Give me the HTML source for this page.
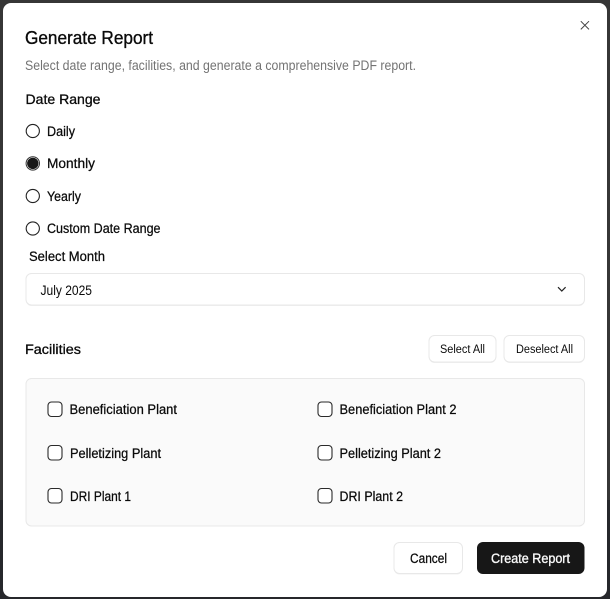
<!DOCTYPE html>
<html><head><meta charset="utf-8"><style>
html,body{margin:0;padding:0;width:610px;height:599px;overflow:hidden;background:#333}
svg{display:block}
text{font-family:"Liberation Sans",sans-serif;fill:#0a0a0a;stroke:#0a0a0a;stroke-width:.25px}
.n{stroke:none}
</style></head><body>
<svg width="610" height="599" viewBox="0 0 610 599" xmlns="http://www.w3.org/2000/svg">
<rect width="610" height="599" fill="#363636"/>
<rect x="0" y="500" width="610" height="99" fill="#26272b"/>
<rect x="3" y="3" width="604" height="594" rx="8" fill="#fff"/>
<path d="M580.8 21.2L589 29.4M589 21.2L580.8 29.4" stroke="#444" stroke-width="1" fill="none"/>
<text x="25" y="44" font-size="18.5" textLength="128" lengthAdjust="spacingAndGlyphs" style="stroke-width:.35px">Generate Report</text>
<text x="25" y="70" font-size="13.5" textLength="391" lengthAdjust="spacingAndGlyphs" class="n" style="fill:#737373">Select date range, facilities, and generate a comprehensive PDF report.</text>
<text x="25.5" y="104" font-size="14" textLength="75" lengthAdjust="spacingAndGlyphs" style="stroke-width:.3px">Date Range</text>
<circle cx="32.8" cy="131" r="6.6" fill="#fff" stroke="#222" stroke-width="1.1"/>
<text x="47" y="136" font-size="13.5" textLength="28" lengthAdjust="spacingAndGlyphs">Daily</text>
<circle cx="32.8" cy="163.4" r="6.7" fill="#fff" stroke="#333" stroke-width="1"/>
<circle cx="32.8" cy="163.4" r="5.7" fill="#171717"/>
<text x="47" y="168" font-size="13.5" textLength="48" lengthAdjust="spacingAndGlyphs">Monthly</text>
<circle cx="32.8" cy="196" r="6.6" fill="#fff" stroke="#222" stroke-width="1.1"/>
<text x="47" y="201" font-size="13.5" textLength="34" lengthAdjust="spacingAndGlyphs">Yearly</text>
<circle cx="32.8" cy="228.5" r="6.6" fill="#fff" stroke="#222" stroke-width="1.1"/>
<text x="47" y="233" font-size="13.5" textLength="113.5" lengthAdjust="spacingAndGlyphs">Custom Date Range</text>
<text x="29" y="261" font-size="13.5" textLength="76" lengthAdjust="spacingAndGlyphs">Select Month</text>
<rect x="26" y="274.5" width="558.5" height="31.5" rx="5.5" fill="#f0f0f0"/>
<rect x="26" y="273.5" width="558.5" height="31.5" rx="5.5" fill="#fff" stroke="#e8e8e8"/>
<text x="40.5" y="295" font-size="13.5" textLength="51.5" lengthAdjust="spacingAndGlyphs" class="n">July 2025</text>
<path d="M558 287.2L561.8 291L565.6 287.2" stroke="#222" stroke-width="1.2" fill="none"/>
<text x="25" y="354" font-size="13.5" textLength="56" lengthAdjust="spacingAndGlyphs" style="stroke-width:.3px">Facilities</text>
<rect x="429" y="336.5" width="67" height="26.5" rx="5.5" fill="#f0f0f0"/>
<rect x="429" y="335.5" width="67" height="26.5" rx="5.5" fill="#fff" stroke="#e8e8e8"/>
<text x="440" y="353" font-size="11.5" textLength="45" lengthAdjust="spacingAndGlyphs" class="n">Select All</text>
<rect x="504" y="336.5" width="80.5" height="26.5" rx="5.5" fill="#f0f0f0"/>
<rect x="504" y="335.5" width="80.5" height="26.5" rx="5.5" fill="#fff" stroke="#e8e8e8"/>
<text x="516" y="353" font-size="11.5" textLength="57" lengthAdjust="spacingAndGlyphs" class="n">Deselect All</text>
<rect x="26" y="378.5" width="558.5" height="147.5" rx="5.5" fill="#fafafa" stroke="#e8e8e8"/>
<g fill="#fff" stroke="#2a2a2a" stroke-width="1.1">
<rect x="48" y="402" width="14" height="14.5" rx="3.5"/>
<rect x="318" y="402" width="14" height="14.5" rx="3.5"/>
<rect x="48" y="445.5" width="14" height="14.5" rx="3.5"/>
<rect x="318" y="445.5" width="14" height="14.5" rx="3.5"/>
<rect x="48" y="488.5" width="14" height="14.5" rx="3.5"/>
<rect x="318" y="488.5" width="14" height="14.5" rx="3.5"/>
</g>
<text x="69.5" y="414" font-size="13.5" textLength="107.5" lengthAdjust="spacingAndGlyphs">Beneficiation Plant</text>
<text x="339.5" y="414" font-size="13.5" textLength="117" lengthAdjust="spacingAndGlyphs">Beneficiation Plant 2</text>
<text x="70" y="458" font-size="13.5" textLength="91" lengthAdjust="spacingAndGlyphs">Pelletizing Plant</text>
<text x="339.5" y="458" font-size="13.5" textLength="101.5" lengthAdjust="spacingAndGlyphs">Pelletizing Plant 2</text>
<text x="70" y="501" font-size="13.5" textLength="61" lengthAdjust="spacingAndGlyphs">DRI Plant 1</text>
<text x="339.5" y="501" font-size="13.5" textLength="63.5" lengthAdjust="spacingAndGlyphs">DRI Plant 2</text>
<rect x="394" y="543.5" width="68.5" height="31" rx="5.5" fill="#f0f0f0"/>
<rect x="394" y="542.5" width="68.5" height="31" rx="5.5" fill="#fff" stroke="#e8e8e8"/>
<text x="410" y="563" font-size="13.5" textLength="37" lengthAdjust="spacingAndGlyphs">Cancel</text>
<rect x="477" y="542" width="107.5" height="32" rx="6" fill="#171717"/>
<text x="491" y="563" font-size="13.5" textLength="79" lengthAdjust="spacingAndGlyphs" style="fill:#fafafa;stroke:#fafafa;stroke-width:.35px">Create Report</text>
</svg>
</body></html>
